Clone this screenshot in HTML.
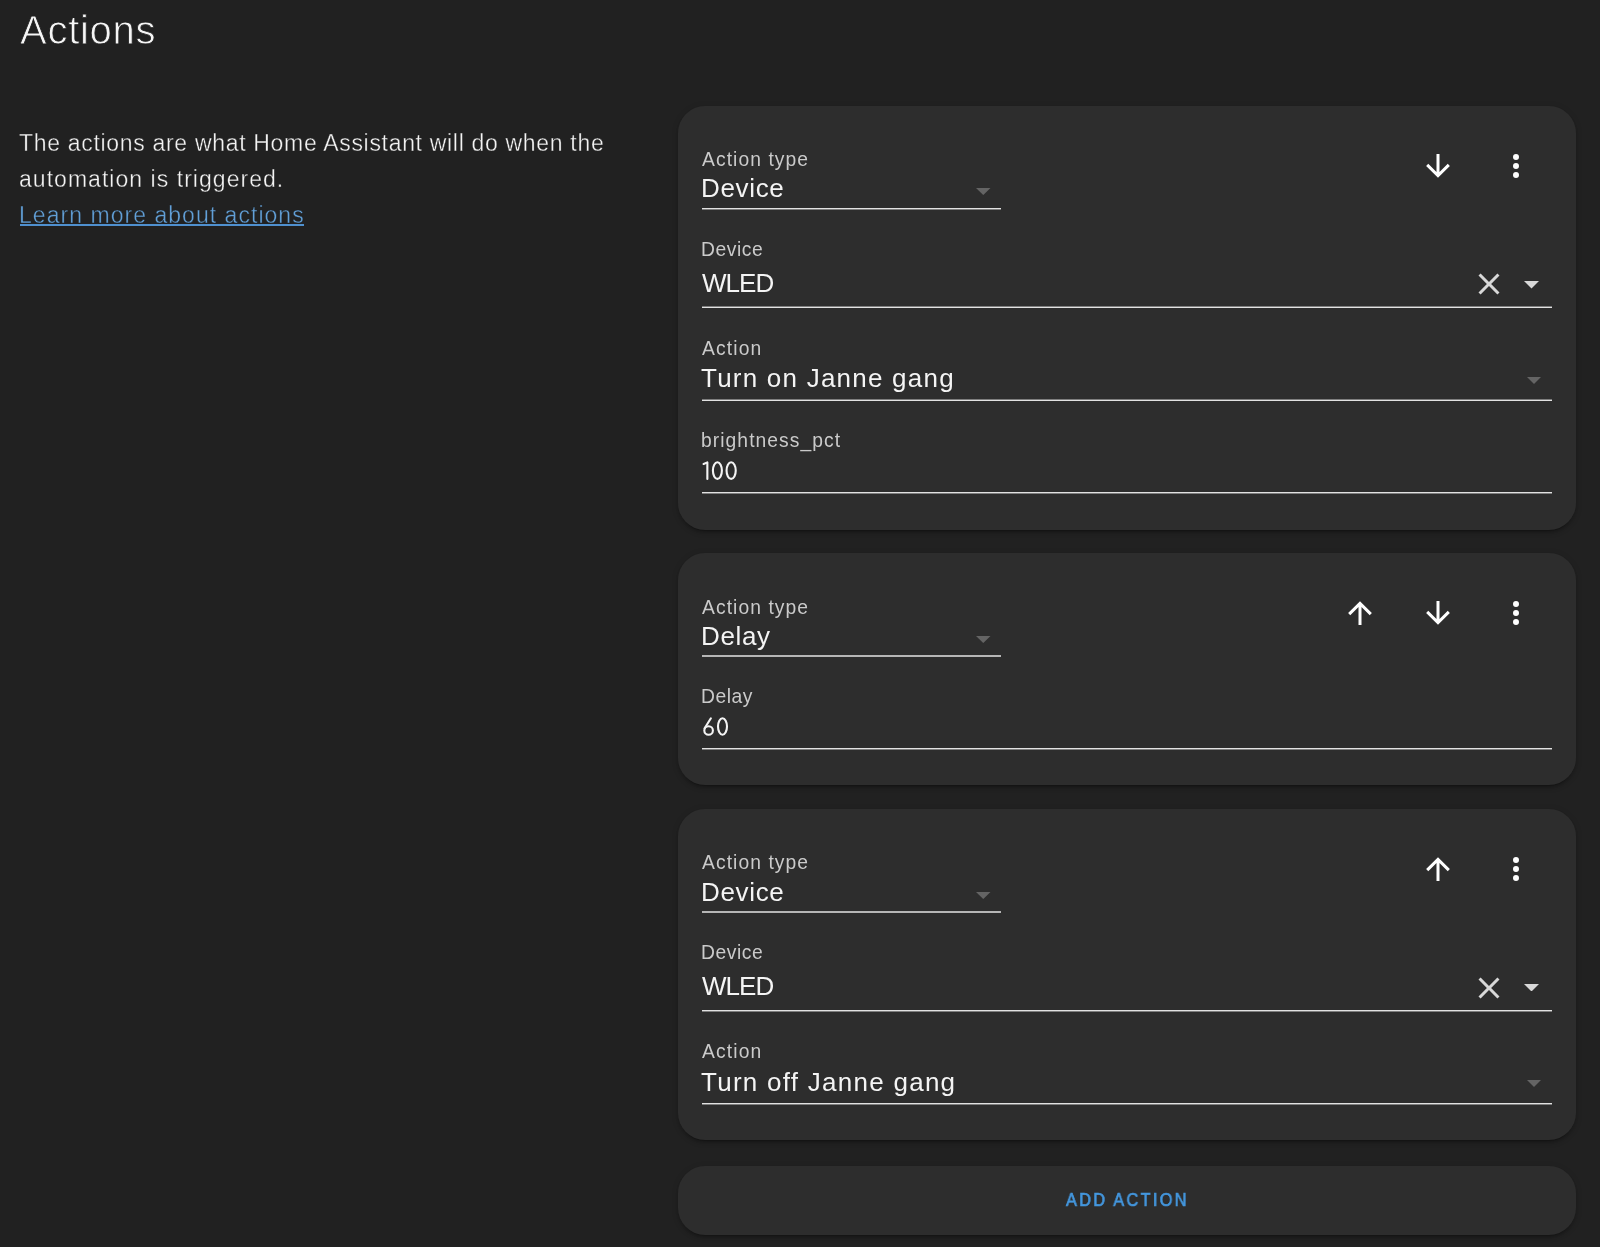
<!DOCTYPE html>
<html><head><meta charset="utf-8"><title>Actions</title><style>
html,body{margin:0;padding:0;width:1600px;height:1247px;overflow:hidden;background:#212121;}
.t{position:absolute;line-height:1;white-space:pre;font-family:"Liberation Sans",sans-serif;will-change:transform;}
.r{position:absolute;display:block;}
.card{position:absolute;left:678px;width:898px;background:#2d2d2d;border-radius:27px;box-shadow:0 3px 3px 0 rgba(0,0,0,.14),0 1.5px 7px 0 rgba(0,0,0,.12),0 4px 1.5px -3px rgba(0,0,0,.2);}
</style></head><body>
<div class="t" style="left:19.71px;top:10px;font-size:40px;letter-spacing:0.729px;color:#f6f6f6;-webkit-text-stroke:0.8px #212121">Actions</div>
<div class="t" style="left:18.77px;top:132px;font-size:23px;letter-spacing:0.686px;color:#f4f4f4;-webkit-text-stroke:0.35px #212121">The actions are what Home Assistant will do when the</div>
<div class="t" style="left:19.18px;top:168px;font-size:23px;letter-spacing:1.038px;color:#f4f4f4;-webkit-text-stroke:0.35px #212121">automation is triggered.</div>
<div class="t" style="left:18.82px;top:204px;font-size:23px;letter-spacing:1.038px;color:#62a0d8;-webkit-text-stroke:0.4px #212121">Learn more about actions</div>
<div class="r" style="left:20px;top:224px;width:284px;height:2px;background:#4f90cf;"></div>
<div class="card" style="top:106px;height:424px"></div>
<svg class="r" style="left:1420.00px;top:148.00px" width="36" height="36" viewBox="0 0 24 24"><path d="M11,4H13V16L18.5,10.5L19.92,11.92L12,19.84L4.08,11.92L5.5,10.5L11,16V4Z" fill="#ffffff"/></svg>
<svg class="r" style="left:1498.00px;top:148.00px" width="36" height="36" viewBox="0 0 24 24"><path d="M12,16A2,2 0 0,1 14,18A2,2 0 0,1 12,20A2,2 0 0,1 10,18A2,2 0 0,1 12,16M12,10A2,2 0 0,1 14,12A2,2 0 0,1 12,14A2,2 0 0,1 10,12A2,2 0 0,1 12,10M12,4A2,2 0 0,1 14,6A2,2 0 0,1 12,8A2,2 0 0,1 10,6A2,2 0 0,1 12,4Z" fill="#ffffff"/></svg>
<div class="t" style="left:701.75px;top:150px;font-size:19.3px;letter-spacing:1.07px;color:#cacaca;">Action type</div>
<div class="t" style="left:701.32px;top:175px;font-size:26px;letter-spacing:0.66px;color:#f4f4f4;">Device</div>
<div class="r" style="left:702px;top:208px;width:299px;height:2px;background:linear-gradient(#e2e2e2 50%, #7e7e7e 50%);"></div>
<svg class="r" style="left:976.25px;top:188.40px" width="14.5" height="7" viewBox="0 0 14.5 7"><path d="M0 0H14.5L7.25 7Z" fill="#646464"/></svg>
<div class="t" style="left:700.97px;top:240px;font-size:19.3px;letter-spacing:0.572px;color:#cacaca;">Device</div>
<div class="t" style="left:701.75px;top:270px;font-size:26px;letter-spacing:-0.956px;color:#f4f4f4;">WLED</div>
<svg class="r" style="left:1471.00px;top:266.20px" width="36" height="36" viewBox="0 0 24 24"><path d="M19,6.41L17.59,5L12,10.59L6.41,5L5,6.41L10.59,12L5,17.59L6.41,19L12,13.41L17.59,19L19,17.59L13.41,12L19,6.41Z" fill="#d8d8d8"/></svg>
<svg class="r" style="left:1523.50px;top:281.00px" width="15" height="7.5" viewBox="0 0 15 7.5"><path d="M0 0H15L7.5 7.5Z" fill="#d8d8d8"/></svg>
<div class="r" style="left:702px;top:306px;width:850px;height:2px;background:linear-gradient(#7e7e7e 50%, #e2e2e2 50%);"></div>
<div class="t" style="left:701.75px;top:339px;font-size:19.3px;letter-spacing:1.128px;color:#cacaca;">Action</div>
<div class="t" style="left:701.37px;top:365px;font-size:26px;letter-spacing:1.226px;color:#f4f4f4;">Turn on Janne gang</div>
<svg class="r" style="left:1527.00px;top:376.80px" width="14" height="7" viewBox="0 0 14 7"><path d="M0 0H14L7.0 7Z" fill="#646464"/></svg>
<div class="r" style="left:702px;top:399px;width:850px;height:2px;background:linear-gradient(#7e7e7e 50%, #e2e2e2 50%);"></div>
<div class="t" style="left:700.71px;top:431px;font-size:19.3px;letter-spacing:1.054px;color:#cacaca;">brightness_pct</div>
<svg class="r" style="left:690px;top:450px" width="60" height="40" viewBox="690 450 60 40" fill="none" stroke="#f4f4f4" stroke-width="2.1" stroke-linecap="round" stroke-linejoin="round"><path d="M703.6 464 L707.35 462.4 V478.9"/><ellipse cx="717.4" cy="470.6" rx="4.5" ry="8.3"/><ellipse cx="731.15" cy="470.6" rx="4.6" ry="8.3"/></svg>
<div class="r" style="left:702px;top:492px;width:850px;height:2px;background:linear-gradient(#e2e2e2 50%, #7e7e7e 50%);"></div>
<div class="card" style="top:552.5px;height:232.5px"></div>
<svg class="r" style="left:1342.00px;top:595.00px" width="36" height="36" viewBox="0 0 24 24"><path d="M13,20H11V8L5.5,13.5L4.08,12.08L12,4.16L19.92,12.08L18.5,13.5L13,8V20Z" fill="#ffffff"/></svg>
<svg class="r" style="left:1420.00px;top:595.00px" width="36" height="36" viewBox="0 0 24 24"><path d="M11,4H13V16L18.5,10.5L19.92,11.92L12,19.84L4.08,11.92L5.5,10.5L11,16V4Z" fill="#ffffff"/></svg>
<svg class="r" style="left:1498.00px;top:595.00px" width="36" height="36" viewBox="0 0 24 24"><path d="M12,16A2,2 0 0,1 14,18A2,2 0 0,1 12,20A2,2 0 0,1 10,18A2,2 0 0,1 12,16M12,10A2,2 0 0,1 14,12A2,2 0 0,1 12,14A2,2 0 0,1 10,12A2,2 0 0,1 12,10M12,4A2,2 0 0,1 14,6A2,2 0 0,1 12,8A2,2 0 0,1 10,6A2,2 0 0,1 12,4Z" fill="#ffffff"/></svg>
<div class="t" style="left:701.75px;top:598px;font-size:19.3px;letter-spacing:1.07px;color:#cacaca;">Action type</div>
<div class="t" style="left:700.82px;top:623px;font-size:26px;letter-spacing:0.653px;color:#f4f4f4;">Delay</div>
<div class="r" style="left:702px;top:655px;width:299px;height:2px;background:#b6b6b6;"></div>
<svg class="r" style="left:976.25px;top:636.20px" width="14.5" height="7" viewBox="0 0 14.5 7"><path d="M0 0H14.5L7.25 7Z" fill="#646464"/></svg>
<div class="t" style="left:701.47px;top:687px;font-size:19.3px;letter-spacing:0.494px;color:#cacaca;">Delay</div>
<svg class="r" style="left:690px;top:705px" width="60" height="40" viewBox="690 705 60 40" fill="none" stroke="#f4f4f4" stroke-width="2.1" stroke-linecap="round" stroke-linejoin="round"><circle cx="708.6" cy="730.5" r="4.3"/><path d="M710.9 718.3 L704.6 728.3"/><ellipse cx="722.5" cy="726.5" rx="4.5" ry="8.25"/></svg>
<div class="r" style="left:702px;top:748px;width:850px;height:2px;background:linear-gradient(#e2e2e2 50%, #7e7e7e 50%);"></div>
<div class="card" style="top:809px;height:331px"></div>
<svg class="r" style="left:1420.00px;top:851.00px" width="36" height="36" viewBox="0 0 24 24"><path d="M13,20H11V8L5.5,13.5L4.08,12.08L12,4.16L19.92,12.08L18.5,13.5L13,8V20Z" fill="#ffffff"/></svg>
<svg class="r" style="left:1498.00px;top:851.00px" width="36" height="36" viewBox="0 0 24 24"><path d="M12,16A2,2 0 0,1 14,18A2,2 0 0,1 12,20A2,2 0 0,1 10,18A2,2 0 0,1 12,16M12,10A2,2 0 0,1 14,12A2,2 0 0,1 12,14A2,2 0 0,1 10,12A2,2 0 0,1 12,10M12,4A2,2 0 0,1 14,6A2,2 0 0,1 12,8A2,2 0 0,1 10,6A2,2 0 0,1 12,4Z" fill="#ffffff"/></svg>
<div class="t" style="left:701.75px;top:853px;font-size:19.3px;letter-spacing:1.07px;color:#cacaca;">Action type</div>
<div class="t" style="left:701.32px;top:879px;font-size:26px;letter-spacing:0.66px;color:#f4f4f4;">Device</div>
<div class="r" style="left:702px;top:911px;width:299px;height:2px;background:#b6b6b6;"></div>
<svg class="r" style="left:976.25px;top:892.20px" width="14.5" height="7" viewBox="0 0 14.5 7"><path d="M0 0H14.5L7.25 7Z" fill="#646464"/></svg>
<div class="t" style="left:700.97px;top:943px;font-size:19.3px;letter-spacing:0.572px;color:#cacaca;">Device</div>
<div class="t" style="left:701.75px;top:973px;font-size:26px;letter-spacing:-0.956px;color:#f4f4f4;">WLED</div>
<svg class="r" style="left:1471.00px;top:969.70px" width="36" height="36" viewBox="0 0 24 24"><path d="M19,6.41L17.59,5L12,10.59L6.41,5L5,6.41L10.59,12L5,17.59L6.41,19L12,13.41L17.59,19L19,17.59L13.41,12L19,6.41Z" fill="#d8d8d8"/></svg>
<svg class="r" style="left:1523.50px;top:983.60px" width="15" height="7.5" viewBox="0 0 15 7.5"><path d="M0 0H15L7.5 7.5Z" fill="#d8d8d8"/></svg>
<div class="r" style="left:702px;top:1010px;width:850px;height:2px;background:linear-gradient(#e2e2e2 50%, #7e7e7e 50%);"></div>
<div class="t" style="left:701.75px;top:1042px;font-size:19.3px;letter-spacing:1.128px;color:#cacaca;">Action</div>
<div class="t" style="left:701.47px;top:1069px;font-size:26px;letter-spacing:1.266px;color:#f4f4f4;">Turn off Janne gang</div>
<svg class="r" style="left:1527.00px;top:1080.30px" width="14" height="7" viewBox="0 0 14 7"><path d="M0 0H14L7.0 7Z" fill="#646464"/></svg>
<div class="r" style="left:702px;top:1103px;width:850px;height:2px;background:linear-gradient(#e2e2e2 50%, #7e7e7e 50%);"></div>
<div class="card" style="top:1165.5px;height:69.2px"></div>
<div class="t" style="left:1066px;top:1191px;font-size:18.5px;letter-spacing:2.64px;color:#4497de;-webkit-text-stroke:0.7px #4497de;transform:scaleX(0.88);transform-origin:0 0">ADD ACTION</div>
</body></html>
